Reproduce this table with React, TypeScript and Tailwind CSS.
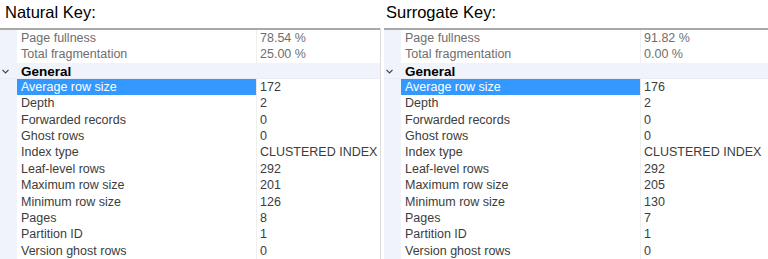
import React from "react";

type Row = { name: string; value: string; dim?: boolean };

interface PanelProps {
	title: string;
	top: Row[];
	general: Row[];
}

const natural: PanelProps = {
	title: "Natural Key:",
	top: [
		{ name: "Page fullness", value: "78.54 %", dim: true },
		{ name: "Total fragmentation", value: "25.00 %", dim: true },
	],
	general: [
		{ name: "Average row size", value: "172" },
		{ name: "Depth", value: "2" },
		{ name: "Forwarded records", value: "0" },
		{ name: "Ghost rows", value: "0" },
		{ name: "Index type", value: "CLUSTERED INDEX" },
		{ name: "Leaf-level rows", value: "292" },
		{ name: "Maximum row size", value: "201" },
		{ name: "Minimum row size", value: "126" },
		{ name: "Pages", value: "8" },
		{ name: "Partition ID", value: "1" },
		{ name: "Version ghost rows", value: "0" },
	],
};

const surrogate: PanelProps = {
	title: "Surrogate Key:",
	top: [
		{ name: "Page fullness", value: "91.82 %", dim: true },
		{ name: "Total fragmentation", value: "0.00 %", dim: true },
	],
	general: [
		{ name: "Average row size", value: "176" },
		{ name: "Depth", value: "2" },
		{ name: "Forwarded records", value: "0" },
		{ name: "Ghost rows", value: "0" },
		{ name: "Index type", value: "CLUSTERED INDEX" },
		{ name: "Leaf-level rows", value: "292" },
		{ name: "Maximum row size", value: "205" },
		{ name: "Minimum row size", value: "130" },
		{ name: "Pages", value: "7" },
		{ name: "Partition ID", value: "1" },
		{ name: "Version ghost rows", value: "0" },
	],
};

function PropRow({ row, selected }: { row: Row; selected?: boolean }) {
	const tone = row.dim ? "text-[#6e6e6e]" : "text-[#3c3c3c]";
	return (
		<div className="grid h-[16.36px] grid-cols-[17px_240px_1fr] overflow-hidden text-[12.5px] leading-[17px]">
			<div className="bg-[#f0f3f9]" />
			<div
				className={
					selected
						? "border-b border-r border-b-[#f0f0f0] border-r-[#e6e6e6] bg-[#3399ff] pl-1 text-white"
						: `border-b border-r border-[#efefef] bg-white pl-1 ${tone}`
				}
			>
				{row.name}
			</div>
			<div className={`border-b border-[#efefef] bg-white pl-[3px] ${tone}`}>{row.value}</div>
		</div>
	);
}

function Panel({ title, top, general, last }: PanelProps & { last?: boolean }) {
	return (
		<div className="flex w-[384px] flex-col">
			<div className={`h-[28px] pt-[2px] text-[16.5px] leading-[20px] text-black ${last ? "pl-[2px]" : "pl-[5px]"}`}>
				{title}
			</div>
			<div className={`flex ${last ? "" : "pr-[3px]"}`}>
				<div className="flex-1 border-t-2 border-[#a8a8a8]">
					{top.map((r) => (
						<PropRow key={r.name} row={r} />
					))}
					<div className="flex h-[16.36px] items-center border-b border-[#e8ecf4] bg-[#f0f3f9] pt-[2px]">
						<div className="flex w-[17px] justify-start pl-[2px]">
							<svg width="7" height="5" viewBox="0 0 7 5">
								<polyline points="0.5,0.8 3.5,3.8 6.5,0.8" fill="none" stroke="#404040" strokeWidth="1.2" />
							</svg>
						</div>
						<span className="pl-1 text-[13.5px] font-bold leading-[15px] text-black">General</span>
					</div>
					{general.map((r, i) => (
						<PropRow key={r.name} row={r} selected={i === 0} />
					))}
				</div>
				{!last && <div className="w-px bg-[#dcdcdc]" />}
			</div>
		</div>
	);
}

export default function App() {
	return (
		<div
			className="flex h-[259px] w-[768px] overflow-hidden bg-white"
			style={{ fontFamily: '"Liberation Sans", Arial, sans-serif' }}
		>
			<Panel {...natural} />
			<Panel {...surrogate} last />
		</div>
	);
}
